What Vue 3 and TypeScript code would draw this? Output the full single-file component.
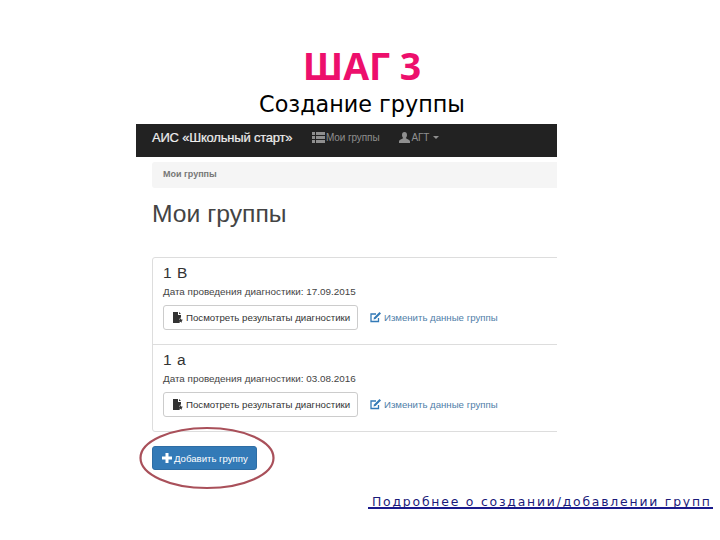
<script setup lang="ts">
const groups = [
  { name: '1 В', date: '17.09.2015' },
  { name: '1 а', date: '03.08.2016' },
]
</script>

<template>
  <div class="slide">
    <h1 class="title">ШАГ 3</h1>
    <div class="subtitle">Создание группы</div>
    <div class="shot">
      <nav class="navbar">
        <span class="brand">АИС «Школьный старт»</span>
        <span class="nav-item">
          <svg class="nav-ico" width="13" height="11" viewBox="0 0 13 11"><path fill="#8f8f8f" d="M0 0h3v3H0zM4 0h9v3H4zM0 4h3v3H0zM4 4h9v3H4zM0 8h3v3H0zM4 8h9v3H4z"/></svg>Мои группы
        </span>
        <span class="nav-item user">
          <svg class="nav-ico" width="11" height="11" viewBox="0 0 11 11"><path fill="#8f8f8f" d="M5.500 0C7.200 0 8 1.300 8 3c0 1.300-.6 2.400-1.200 3 0 .7 4.200 1.500 4.200 3.500V11H0V9.500C0 7.500 4.200 6.700 4.200 6 3.600 5.400 3 4.300 3 3c0-1.700.8-3 2.500-3z"/></svg>АГТ
          <i class="caret"></i>
        </span>
      </nav>
      <div class="content">
        <div class="breadcrumb">Мои группы</div>
        <h2 class="page-title">Мои группы</h2>
        <div class="panel">
          <div v-for="g in groups" :key="g.name" class="row">
            <div class="group-name">{{ g.name }}</div>
            <div class="group-date">Дата проведения диагностики: {{ g.date }}</div>
            <div class="actions">
              <button class="btn-default">
                <svg width="10" height="11" viewBox="0 0 10 11"><path fill="#333" d="M0 0h5v3h3v2.200L6 7.500 6.500 11H0zM6 0l2 2H6z"/><path fill="#333" d="M7.500 6 8.200 7.500 10 7.800 8.700 9 9 10.700 7.500 9.800 6 10.700 6.300 9 5 7.800 6.800 7.500z"/></svg>
                Посмотреть результаты диагностики
              </button>
              <span class="edit-link">
                <svg width="11" height="11" viewBox="0 0 11 11"><path fill="none" stroke="#337ab7" stroke-width="1.300" d="M8.500 6v3.500h-7.500v-7.500h5"/><path fill="#337ab7" d="M9.500 0 11 1.500 5.500 7 3.500 7.500 4 5.500z"/></svg>
                Изменить данные группы
              </span>
            </div>
          </div>
        </div>
        <div class="add-wrap">
          <button class="btn-primary">
            <svg width="10" height="10" viewBox="0 0 10 10"><path fill="#fff" d="M3.500 0h3v3.500H10v3H6.500V10h-3V6.500H0v-3h3.500z"/></svg>
            Добавить группу
          </button>
          <svg class="ellipse" width="140" height="66" viewBox="0 0 140 66">
            <ellipse cx="70" cy="33" rx="66.500" ry="30" fill="none" stroke="#a9505a" stroke-width="2.200"/>
          </svg>
        </div>
      </div>
    </div>
    <div class="more"><a class="more-link">Подробнее о создании/добавлении групп</a></div>
  </div>
</template>

<style>
html, body { margin: 0; background: #fff; }
</style>

<style scoped>
.slide {
  width: 720px;
  height: 540px;
  overflow: hidden;
  background: #fff;
  font-family: "Open Sans", sans-serif;
  display: flex;
  flex-direction: column;
}
.title {
  margin: 43px 0 0;
  height: 44px;
  padding-left: 4px;
  text-align: center;
  font-size: 37.500px;
  line-height: 46px;
  font-weight: 700;
  color: #ed0f6c;
}
.subtitle {
  height: 37px;
  padding-left: 4px;
  text-align: center;
  font-family: "DejaVu Sans", sans-serif;
  font-size: 22.300px;
  line-height: 34px;
  color: #000;
}
.shot {
  width: 421px;
  margin-left: 136px;
  overflow: hidden;
  font-family: "Liberation Sans", sans-serif;
}
.navbar {
  height: 33px;
  background: #222;
  display: flex;
  align-items: center;
  padding: 0 0 6px 16px;
  box-sizing: border-box;
}
.brand { color: #eee; font-size: 13px; width: 160px; letter-spacing: -0.200px; -webkit-text-stroke: 0.200px #eee; white-space: nowrap; }
.nav-item { color: #8f8f8f; font-size: 10px; display: flex; align-items: center; gap: 1px; letter-spacing: -0.100px; }
.user { margin-left: 20px; }
.caret {
  margin-left: 3px;
  border-left: 3px solid transparent;
  border-right: 3px solid transparent;
  border-top: 3px solid #8f8f8f;
}
.content { padding: 5px 0 0 16px; }
.breadcrumb {
  height: 26px;
  background: #f5f5f5;
  border-radius: 3px 0 0 3px;
  padding-left: 11px;
  font-size: 9px;
  font-weight: 700;
  line-height: 25px;
  color: #777;
}
.page-title {
  margin: 9px 0 0;
  height: 34px;
  font-size: 24.700px;
  font-weight: 400;
  line-height: 33px;
  color: #444;
}
.panel {
  width: 440px;
  margin-top: 26px;
  border: 1px solid #ddd;
  border-radius: 3px;
  box-sizing: border-box;
}
.row {
  height: 86px;
  padding-left: 10px;
  box-sizing: border-box;
}
.row + .row { border-top: 1px solid #ddd; height: 87px; }
.group-name {
  padding-top: 7px;
  height: 16px;
  font-size: 15.500px;
  line-height: 16px;
  color: #333;
  letter-spacing: 0.500px;
}
.group-date {
  margin-top: 5px;
  height: 12px;
  font-size: 9.900px;
  line-height: 12px;
  color: #444;
}
.actions {
  margin-top: 7px;
  display: flex;
  align-items: center;
  gap: 12px;
}
.btn-default {
  width: 195px;
  height: 25px;
  padding: 0 0 0 9px;
  display: flex;
  align-items: center;
  gap: 3px;
  background: #fff;
  border: 1px solid #ccc;
  border-radius: 3px;
  font-family: inherit;
  font-size: 9.700px;
  color: #333;
  white-space: nowrap;
  box-sizing: border-box;
}
.edit-link {
  display: flex;
  align-items: center;
  gap: 3px;
  font-size: 9.650px;
  color: #4f7ea8;
}
.add-wrap {
  position: relative;
  margin-top: 14px;
  height: 50px;
}
.btn-primary {
  width: 105px;
  height: 24px;
  padding: 0 0 0 9px;
  display: flex;
  align-items: center;
  gap: 2px;
  background: #337ab7;
  border: 1px solid #2e6da4;
  border-radius: 3px;
  font-family: inherit;
  font-size: 9.600px;
  color: #fff;
  white-space: nowrap;
  box-sizing: border-box;
}
.ellipse {
  position: absolute;
  left: -15px;
  top: -21px;
  pointer-events: none;
}
.more {
  margin-left: 368px;
  margin-top: 0;
}
.more-link {
  display: block;
  width: 345px;
  padding-left: 4px;
  box-sizing: border-box;
  font-family: "DejaVu Sans", sans-serif;
  font-size: 12.400px;
  line-height: 11px;
  letter-spacing: 1.800px;
  white-space: nowrap;
  color: #1a1a7a;
  border-bottom: 2px solid #1a1a8c;
}
</style>
